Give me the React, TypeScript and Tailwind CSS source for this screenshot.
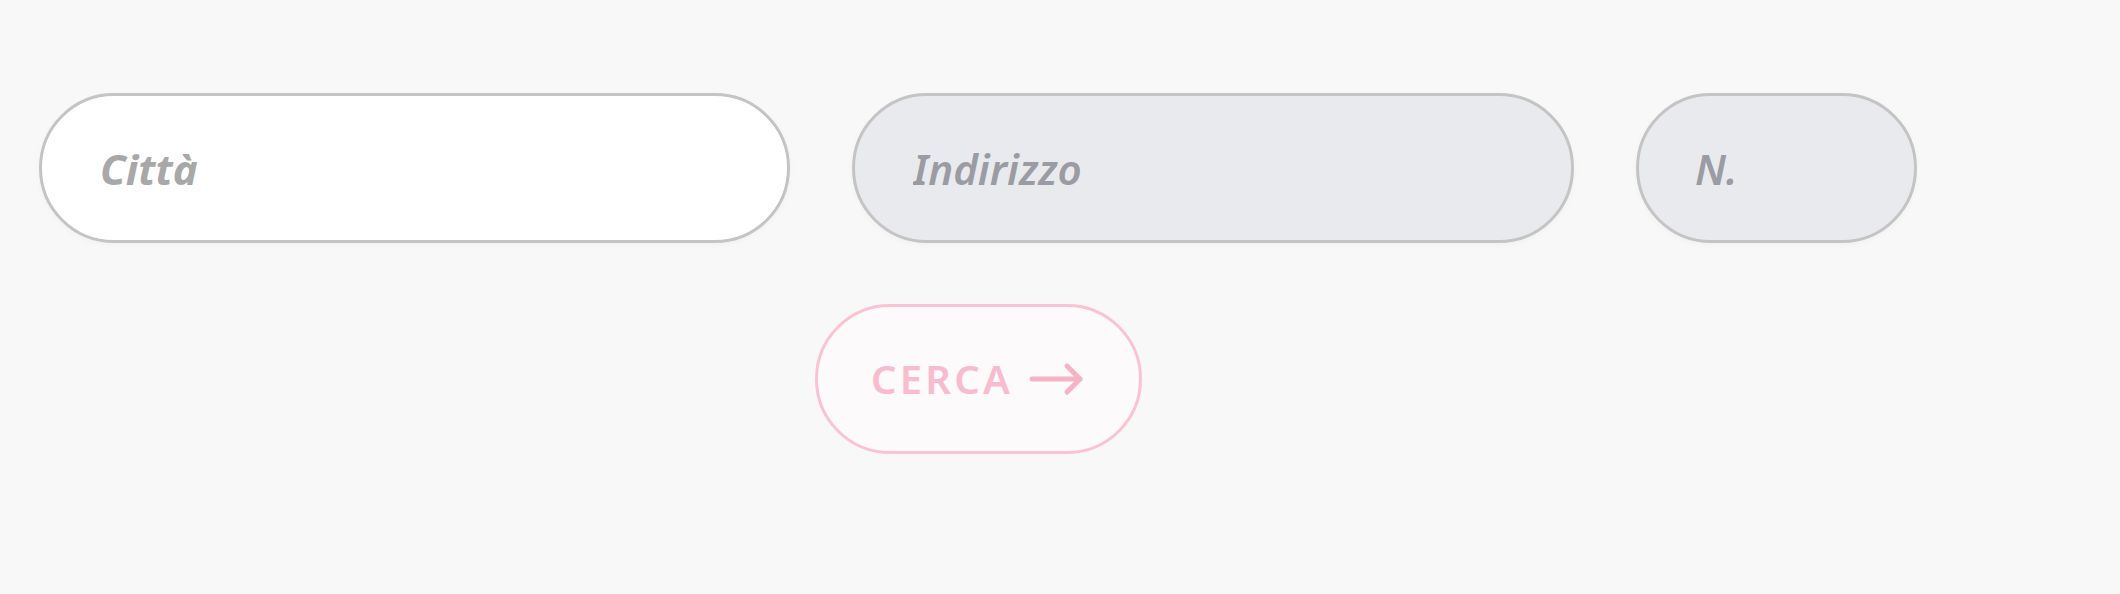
import React, { useState } from 'react';

const font = { fontFamily: '"Noto Sans", "Open Sans", sans-serif' };

export default function App() {
  const [city, setCity] = useState('');
  const [street, setStreet] = useState('');
  const [num, setNum] = useState('');

  return (
    <div className="min-h-screen w-full bg-[#f8f8f8] pl-[39px] pt-[93px]" style={font}>
      <div className="inline-flex flex-col items-center gap-[61px]">
        {/* Address fields */}
        <div className="flex gap-[62px]">
          <input
            value={city}
            onChange={(e) => setCity(e.target.value)}
            placeholder="Città"
            className="h-[150px] w-[751px] rounded-[75px] border-[3px] border-[#c4c4c4] bg-white pl-[58px] pr-8 text-[42px] font-bold italic text-[#777] shadow-[0_2px_6px_rgba(0,0,0,0.03)] outline-none placeholder:text-[#a8a8a8]"
          />
          <input
            value={street}
            onChange={(e) => setStreet(e.target.value)}
            placeholder="Indirizzo"
            className="h-[150px] w-[722px] rounded-[75px] border-[3px] border-[#c4c4c4] bg-[#e9eaee] pl-[58px] pr-8 text-[42px] font-semibold italic text-[#777] shadow-[0_2px_6px_rgba(0,0,0,0.03)] outline-none placeholder:text-[#9b9ca3]"
          />
          <input
            value={num}
            onChange={(e) => setNum(e.target.value)}
            placeholder="N."
            className="h-[150px] w-[281px] rounded-[75px] border-[3px] border-[#c4c4c4] bg-[#e9eaee] pl-[56px] pr-6 text-[42px] font-semibold italic text-[#777] shadow-[0_2px_6px_rgba(0,0,0,0.03)] outline-none placeholder:text-[#9b9ca3]"
          />
        </div>

        {/* Submit */}
        <button className="flex h-[150px] w-[327px] items-center justify-center gap-[16px] rounded-[75px] border-[3px] border-[#fbc3d2] bg-[#fcfafb] text-[40px] font-semibold tracking-[0.08em] text-[#f9bcce]">
          <span>CERCA</span>
          <svg width="56" height="34" viewBox="0 0 56 34" fill="none" stroke="#f7b3c6" strokeWidth="5" strokeLinecap="round" strokeLinejoin="round">
            <path d="M3 17H51" />
            <path d="M38 4L51 17L38 30" />
          </svg>
        </button>
      </div>
    </div>
  );
}
